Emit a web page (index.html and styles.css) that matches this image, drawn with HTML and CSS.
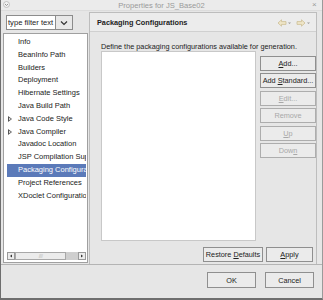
FILE: index.html
```html
<!DOCTYPE html>
<html lang="en">
<head>
    <meta charset="UTF-8">
    <title>Properties for JS_Base02</title>
    <link rel="stylesheet" href="styles.css">
</head>
<body>
    <div class="window">
        <!-- Title bar -->
        <div class="titlebar">
            <span class="menu-btn">
                <svg width="7" height="7" viewBox="0 0 7 7"><circle cx="3.5" cy="3.5" r="3" fill="#f2f2f2" stroke="#b5b5b5" stroke-width="0.8"/><path d="M2 3 L3.5 4.5 L5 3" fill="none" stroke="#888" stroke-width="0.9"/></svg>
            </span>
            <span class="title">Properties for JS_Base02</span>
            <span class="close-btn">&times;</span>
        </div>

        <div class="main">
            <!-- Left: filter + tree -->
            <div class="sidebar">
                <div class="filter">
                    <div class="filter-text">type filter text</div>
                    <div class="filter-drop">
                        <svg width="8" height="6" viewBox="0 0 8 6"><path d="M1 1.5 L4 4.5 L7 1.5" fill="none" stroke="#333" stroke-width="1.2"/></svg>
                    </div>
                </div>
                <div class="tree">
                    <ul class="tree-items">
                        <li>Info</li>
                        <li>BeanInfo Path</li>
                        <li>Builders</li>
                        <li>Deployment</li>
                        <li>Hibernate Settings</li>
                        <li>Java Build Path</li>
                        <li class="has-kids">Java Code Style</li>
                        <li class="has-kids">Java Compiler</li>
                        <li>Javadoc Location</li>
                        <li>JSP Compilation Support</li>
                        <li class="selected">Packaging Configurations</li>
                        <li>Project References</li>
                        <li>XDoclet Configurations</li>
                    </ul>
                    <div class="hscroll">
                        <span class="sb-arrow">
                            <svg width="4" height="4" viewBox="0 0 4 4"><path d="M3 0.5 L1 2 L3 3.5Z" fill="#333"/></svg>
                        </span>
                        <span class="sb-thumb"><span class="grip">////</span></span>
                        <span class="sb-trough"></span>
                        <span class="sb-arrow">
                            <svg width="4" height="4" viewBox="0 0 4 4"><path d="M1 0.5 L3 2 L1 3.5Z" fill="#333"/></svg>
                        </span>
                    </div>
                </div>
            </div>

            <!-- Right: property page -->
            <div class="page">
                <div class="page-head">
                    <span class="page-title">Packaging Configurations</span>
                    <span class="nav-arrows">
                        <svg width="34" height="8" viewBox="0 0 34 8">
                            <path d="M1 4 L4.5 0.8 L4.5 2.6 L9 2.6 L9 5.4 L4.5 5.4 L4.5 7.2 Z" fill="#efe6c8" stroke="#c9b98d" stroke-width="0.7"/>
                            <path d="M11 3.5 L14 3.5 L12.5 5 Z" fill="#999"/>
                            <path d="M28 4 L24.5 0.8 L24.5 2.6 L20 2.6 L20 5.4 L24.5 5.4 L24.5 7.2 Z" fill="#efe6c8" stroke="#c9b98d" stroke-width="0.7"/>
                            <path d="M30 3.5 L33 3.5 L31.5 5 Z" fill="#999"/>
                        </svg>
                    </span>
                </div>
                <div class="page-body">
                    <p class="page-desc">Define the packaging configurations available for generation.</p>
                    <div class="config-row">
                        <div class="config-list"></div>
                        <div class="btn-col">
                            <button class="btn"><u>A</u>dd...</button>
                            <button class="btn">Add <u>S</u>tandard...</button>
                            <button class="btn" disabled><u>E</u>dit...</button>
                            <button class="btn" disabled>Remove</button>
                            <button class="btn" disabled><u>U</u>p</button>
                            <button class="btn" disabled>Dow<u>n</u></button>
                        </div>
                    </div>
                    <div class="page-actions">
                        <button class="btn btn-restore">Restore <u>D</u>efaults</button>
                        <button class="btn btn-apply"><u>A</u>pply</button>
                    </div>
                </div>
            </div>
        </div>

        <!-- OK / Cancel -->
        <div class="dialog-actions">
            <button class="btn btn-ok">OK</button>
            <button class="btn btn-cancel">Cancel</button>
        </div>
    </div>
</body>
</html>
```

FILE: styles.css
```css
/* Reset */
* {
    margin: 0;
    padding: 0;
    box-sizing: border-box;
}

body {
    font-family: 'Liberation Sans', Arial, sans-serif;
    font-size: 7.3px;
    color: #222;
    background-color: #e6e6e6;
}

/* Window frame */
.window {
    width: 323px;
    height: 300px;
    background-color: #e6e6e6;
    border-left: 1px solid #6e6e6e;
    border-right: 1px solid #9a9a9a;
    border-bottom: 2px solid #6e6e6e;
    display: flex;
    flex-direction: column;
}

/* Title bar */
.titlebar {
    height: 11px;
    background-color: #ebebeb;
    display: flex;
    align-items: center;
    padding: 0 2px;
    border-bottom: 1px solid #dcdcdc;
}

.menu-btn {
    width: 8px;
    height: 8px;
    display: flex;
}

.title {
    flex: 1;
    text-align: center;
    color: #9a9a9a;
    font-size: 7.6px;
}

.close-btn {
    color: #9a9a9a;
    font-size: 8px;
    width: 8px;
    line-height: 8px;
}

/* Main area */
.main {
    height: 254px;
    display: flex;
    border-bottom: 1px solid #b4b4b4;
}

/* Sidebar */
.sidebar {
    width: 87px;
    padding: 4px 0 1px 2px;
    display: flex;
    flex-direction: column;
}

.filter {
    display: flex;
    height: 15px;
    margin: 0 15px 3px 3px;
}

.filter-text {
    flex: 1;
    background-color: white;
    border: 1px solid #8c8c8c;
    line-height: 13px;
    padding-left: 1px;
    font-size: 7.6px;
    white-space: nowrap;
    overflow: hidden;
}

.filter-drop {
    width: 17px;
    background-color: #e8e8e8;
    border: 1px solid #8c8c8c;
    border-left: none;
    display: flex;
    align-items: center;
    justify-content: center;
}

.tree {
    flex: 1;
    background-color: white;
    border: 1px solid #a0a0a0;
    padding: 2px 1px 1px 3px;
    display: flex;
    flex-direction: column;
    overflow: hidden;
}

.tree-items {
    list-style: none;
    flex: 1;
}

.tree-items li {
    height: 12.8px;
    line-height: 12.8px;
    padding-left: 11px;
    white-space: nowrap;
    overflow: hidden;
    position: relative;
    font-size: 7.5px;
}

.tree-items li.has-kids::before {
    content: "";
    position: absolute;
    left: 1px;
    top: 3.5px;
    border-left: 4px solid #555;
    border-top: 3px solid transparent;
    border-bottom: 3px solid transparent;
}

.tree-items li.has-kids::after {
    content: "";
    position: absolute;
    left: 2px;
    top: 5px;
    border-left: 2px solid white;
    border-top: 1.5px solid transparent;
    border-bottom: 1.5px solid transparent;
}

.tree-items li.selected {
    background-color: #5b7ab9;
    color: white;
}

/* Horizontal scrollbar */
.hscroll {
    height: 8px;
    display: flex;
    margin-bottom: 1px;
}

.sb-arrow {
    width: 8px;
    border: 1px solid #9a9a9a;
    background-color: #ececec;
    display: flex;
    align-items: center;
    justify-content: center;
}

.sb-thumb {
    flex: 1;
    background-color: #ececec;
    border: 1px solid #a8a8a8;
    display: flex;
    align-items: center;
    justify-content: center;
}

.grip {
    font-size: 5px;
    color: #bbb;
    letter-spacing: -0.5px;
}

.sb-trough {
    width: 12px;
    background-color: #cfcfcf;
}

/* Property page */
.page {
    flex: 1;
    margin: 1px 5px 0 1px;
    border: 1px solid #bdbdbd;
    border-bottom: none;
    display: flex;
    flex-direction: column;
}

.page-head {
    height: 21px;
    display: flex;
    align-items: center;
    justify-content: space-between;
    padding: 1px 5px 0 7px;
    border-bottom: 1px solid #d0d0d0;
    background-color: #ececec;
}

.page-title {
    font-weight: bold;
    font-size: 7.3px;
}

.nav-arrows {
    display: flex;
}

.page-body {
    flex: 1;
    padding: 10px 0 2px 11px;
    display: flex;
    flex-direction: column;
}

.page-desc {
    line-height: 9px;
    margin-bottom: 0;
}

.config-row {
    display: flex;
    height: 190px;
}

.config-list {
    width: 155px;
    background-color: white;
    border: 1px solid #c8c8c8;
}

.btn-col {
    display: flex;
    flex-direction: column;
    gap: 2.4px;
    padding: 5px 0 0 4px;
}

/* Buttons */
.btn {
    font-family: 'Liberation Sans', Arial, sans-serif;
    font-size: 7.3px;
    color: #222;
    background-color: #ebebeb;
    border: 1px solid #8f8f8f;
    height: 15px;
    width: 56px;
    white-space: nowrap;
}

.btn:disabled {
    color: #a8a8a8;
    border-color: #adadad;
}

.btn u {
    text-decoration: underline;
}

.page-actions {
    display: flex;
    justify-content: flex-end;
    gap: 3px;
    margin-top: 6px;
    padding-right: 3px;
}

.btn-restore {
    width: 60px;
}

.btn-apply {
    width: 47px;
}

/* Dialog buttons */
.dialog-actions {
    flex: 1;
    display: flex;
    justify-content: flex-end;
    gap: 9px;
    padding: 7px 8px 0 0;
}

.btn-ok,
.btn-cancel {
    width: 49px;
    height: 16px;
}
```
